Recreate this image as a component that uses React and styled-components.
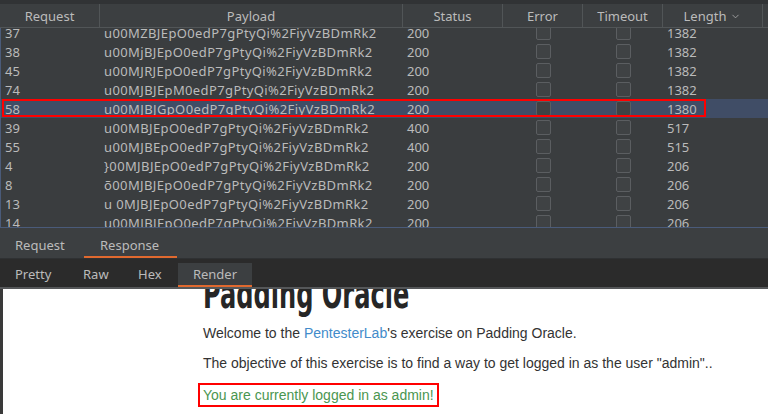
import styled, { createGlobalStyle } from 'styled-components';
import { ChevronDown } from 'lucide-react';

const GlobalStyle = createGlobalStyle`
  html, body {
    margin: 0;
    padding: 0;
    background: #3c3f41;
    overflow: hidden;
  }
  body {
    width: 768px;
    height: 414px;
    font-family: "Noto Sans", "DejaVu Sans", sans-serif;
  }
`;

const rows = [
  { id: 37, payload: 'u00MZBJEpO0edP7gPtyQi%2FiyVzBDmRk2', status: 200, length: 1382 },
  { id: 38, payload: 'u00MjBJEpO0edP7gPtyQi%2FiyVzBDmRk2', status: 200, length: 1382 },
  { id: 45, payload: 'u00MJRJEpO0edP7gPtyQi%2FiyVzBDmRk2', status: 200, length: 1382 },
  { id: 74, payload: 'u00MJBJEpM0edP7gPtyQi%2FiyVzBDmRk2', status: 200, length: 1382 },
  { id: 58, payload: 'u00MJBJGpO0edP7gPtyQi%2FiyVzBDmRk2', status: 200, length: 1380, selected: true },
  { id: 39, payload: 'u00MBJEpO0edP7gPtyQi%2FiyVzBDmRk2', status: 400, length: 517 },
  { id: 55, payload: 'u00MJBEpO0edP7gPtyQi%2FiyVzBDmRk2', status: 400, length: 515 },
  { id: 4, payload: '}00MJBJEpO0edP7gPtyQi%2FiyVzBDmRk2', status: 200, length: 206 },
  { id: 8, payload: 'õ00MJBJEpO0edP7gPtyQi%2FiyVzBDmRk2', status: 200, length: 206 },
  { id: 13, payload: 'u 0MJBJEpO0edP7gPtyQi%2FiyVzBDmRk2', status: 200, length: 206 },
  { id: 14, payload: 'u00MJBJEpO0edP7gPtyQi%2FiyVzBDmRk2', status: 200, length: 206 },
];

const columns = '100px 303px 100px 80px 80px 100px 5px';

const App = () => {
  return (
    <>
      <GlobalStyle />
      <Screen>
        <TopStrip />
        <Table>
          <HeaderRow>
            <HeadCell>Request</HeadCell>
            <HeadCell>Payload</HeadCell>
            <HeadCell>Status</HeadCell>
            <HeadCell>Error</HeadCell>
            <HeadCell>Timeout</HeadCell>
            <HeadCell>
              Length <ChevronDown size={11} strokeWidth={1.6} />
            </HeadCell>
            <HeadCell $last />
          </HeaderRow>
          <Body>
            <Scroll>
              {rows.map((r) => (
                <Row key={r.id} $selected={r.selected}>
                  <Cell $pad={5}>{r.id}</Cell>
                  <Cell $pad={4} $spread>{r.payload}</Cell>
                  <Cell $pad={4}>{r.status}</Cell>
                  <CheckCell><Check /></CheckCell>
                  <CheckCell><Check /></CheckCell>
                  <Cell $pad={4}>{r.length}</Cell>
                  <Cell />
                </Row>
              ))}
            </Scroll>
          </Body>
        </Table>
        <Splitter />
        <Tabs>
          <Tab $w={84}>Request</Tab>
          <Tab $w={93} $active>Response</Tab>
        </Tabs>
        <SubTabs>
          <SubTab $w={68}>Pretty</SubTab>
          <SubTab $w={55}>Raw</SubTab>
          <SubTab $w={55}>Hex</SubTab>
          <SubTab $w={74} $active>Render</SubTab>
        </SubTabs>
        <Render>
          <Page>
            <Heading>Padding Oracle</Heading>
            <Para>
              Welcome to the <LinkText>PentesterLab</LinkText>'s exercise on Padding Oracle.
            </Para>
            <Para>The objective of this exercise is to find a way to get logged in as the user "admin"..</Para>
            <Success>You are currently logged in as admin!</Success>
          </Page>
        </Render>
      </Screen>
    </>
  );
};

const Screen = styled.div`
  width: 768px;
  height: 414px;
  display: flex;
  flex-direction: column;
  overflow: hidden;
  background: #3c3f41;
`;

const TopStrip = styled.div`
  height: 4px;
  background: #313335;
  flex: none;
`;

const Table = styled.div`
  flex: none;
  display: flex;
  flex-direction: column;
  background: #3a3d3f;
`;

const HeaderRow = styled.div`
  display: grid;
  grid-template-columns: ${columns};
  height: 24px;
  background: #3c3f41;
  border-bottom: 1px solid #515557;
  box-sizing: border-box;
`;

const HeadCell = styled.div`
  display: flex;
  align-items: center;
  justify-content: center;
  gap: 4px;
  color: #bbbbbb;
  font-size: 13px;
  border-right: ${(p) => (p.$last ? 'none' : '1px solid #515557')};
  svg {
    margin-top: 1px;
  }
`;

const Body = styled.div`
  height: 200px;
  overflow: hidden;
  border-left: 1px solid #4a5b7a;
  border-bottom: 1px solid #4a5b7a;
  box-sizing: border-box;
`;

const Scroll = styled.div`
  margin-top: -5px;
`;

const Row = styled.div`
  display: grid;
  grid-template-columns: ${columns};
  height: 19px;
  margin-left: -1px;
  position: relative;
  background: ${(p) => (p.$selected ? '#404d66' : 'transparent')};
  &::after {
    content: '';
    display: ${(p) => (p.$selected ? 'block' : 'none')};
    position: absolute;
    left: 2px;
    top: 0;
    width: 704px;
    height: 18px;
    border: 2px solid #ff0000;
    box-sizing: border-box;
  }
`;

const Cell = styled.div`
  display: flex;
  align-items: center;
  padding-left: ${(p) => p.$pad || 0}px;
  color: #bbbbbb;
  font-size: 13px;
  letter-spacing: ${(p) => (p.$spread ? '0.38px' : '0')};
  white-space: nowrap;
  overflow: hidden;
`;

const CheckCell = styled.div`
  display: flex;
  align-items: center;
  justify-content: center;
`;

const Check = styled.span`
  width: 13px;
  height: 13px;
  border: 1px solid #5b5e61;
  border-radius: 2px;
  background: #3f4244;
`;

const Splitter = styled.div`
  height: 5px;
  flex: none;
  background: #3c3f41;
`;

const Tabs = styled.div`
  height: 26px;
  flex: none;
  display: flex;
  background: #3c3f41;
  border-bottom: 1px solid #2f3133;
  box-sizing: border-box;
`;

const Tab = styled.div`
  width: ${(p) => p.$w}px;
  padding: 1px 0 0 ${(p) => (p.$active ? 16 : 15)}px;
  display: flex;
  align-items: center;
  color: #bbbbbb;
  font-size: 13px;
  box-sizing: border-box;
  border-bottom: 2px solid ${(p) => (p.$active ? '#e0692f' : 'transparent')};
`;

const SubTabs = styled.div`
  height: 30px;
  flex: none;
  display: flex;
  align-items: flex-end;
  background: #2b2b2b;
  border-bottom: 2px solid #555759;
  box-sizing: border-box;
`;

const SubTab = styled.div`
  width: ${(p) => p.$w}px;
  height: 24px;
  padding-left: ${(p) => (p.$active ? 0 : 15)}px;
  display: flex;
  align-items: center;
  justify-content: ${(p) => (p.$active ? 'center' : 'flex-start')};
  box-sizing: border-box;
  color: #bbbbbb;
  font-size: 13px;
  background: ${(p) => (p.$active ? '#3c3f41' : 'transparent')};
  border-bottom: 2px solid ${(p) => (p.$active ? '#e0692f' : 'transparent')};
`;

const Render = styled.div`
  flex: 1;
  background: #ffffff;
  border-left: 3px solid #3a3a3a;
  overflow: hidden;
`;

const Page = styled.div`
  padding-left: 200px;
  font-family: "Liberation Sans", Arial, sans-serif;
  color: #333333;
`;

/* the page is scrolled: only the lower part of the title shows */
const Heading = styled.h1`
  margin: 0 0 24px;
  font-family: "DejaVu Sans Condensed", "DejaVu Sans", sans-serif;
  font-weight: 700;
  font-size: 40px;
  line-height: 10px;
  height: 10px;
  color: #262626;
  transform: scaleX(0.67);
  transform-origin: left center;
  white-space: nowrap;
`;

const Para = styled.p`
  margin: 0 0 10px;
  font-size: 14px;
  line-height: 20px;
`;

const LinkText = styled.span`
  color: #428bca;
`;

const Success = styled.div`
  display: inline-block;
  margin-left: -5px;
  padding: 0 3px;
  border: 2px solid #ff0000;
  color: #4a9650;
  font-size: 14px;
  line-height: 20px;
`;

export default App;
